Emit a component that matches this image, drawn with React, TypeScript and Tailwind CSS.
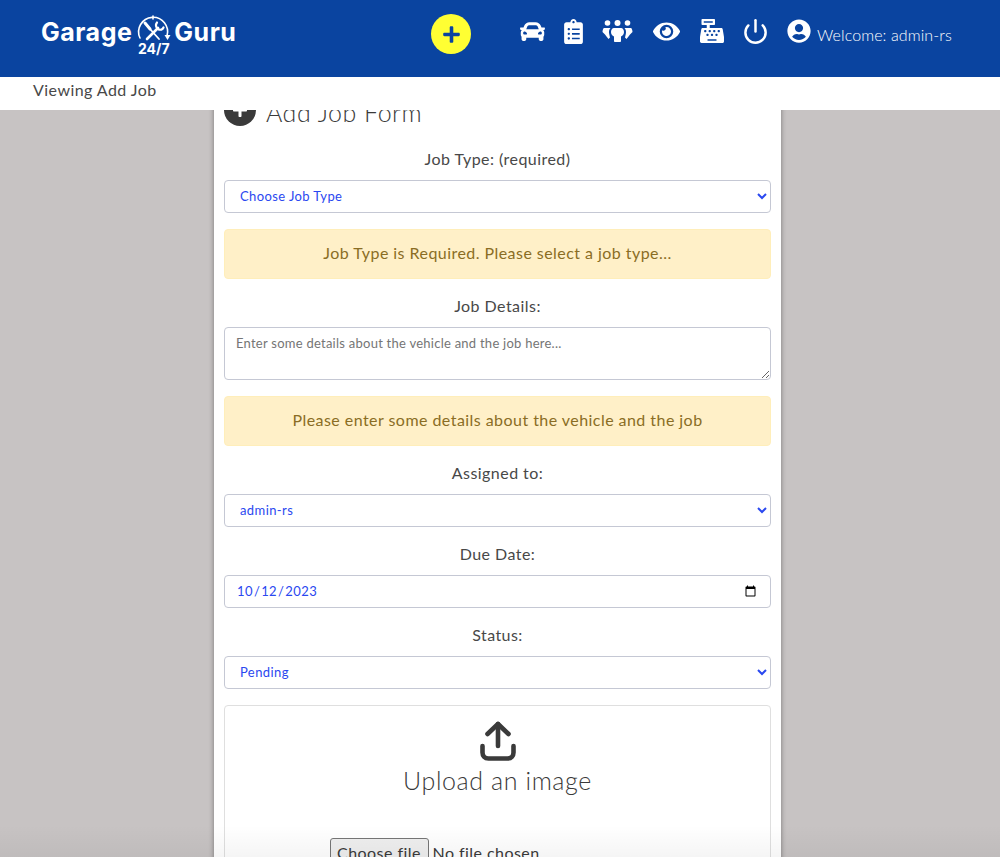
import { FaCar, FaClipboardList, FaEye, FaCashRegister, FaPlus, FaUserCircle } from "react-icons/fa"
import { LuPower } from "react-icons/lu"

const labelClass = "block h-6 text-center text-base text-[#484848] leading-[22px] mb-2"
const controlClass = "w-full h-[33px] rounded border border-[#c5c8d4] bg-white px-[11px] text-[13px] tracking-[0.4px] text-[#2a48f0]"

function Alert({ text }: { text: string }) {
  return (
    <div className="mb-4 h-[50px] pb-[2px] rounded border border-[#ffeeba] bg-[#fff0c8] flex items-center justify-center text-base text-[#8a6d24]">
      {text}
    </div>
  )
}

function Logo() {
  return (
    <div className="relative flex items-center text-white font-bold text-[25px] leading-none font-['Inter',sans-serif] tracking-[0.5px]">
      <span>Garage</span>
      <svg viewBox="0 0 36 36" className="w-[36px] h-[36px] mx-[3px]" fill="none" stroke="white" strokeWidth="1.6" strokeLinecap="round">
        <path d="M5 24A14.500 14.500 0 1 1 32 22" />
        <path d="M18 2v3" />
        <path d="M29.500 21l3 5 3-5z" fill="white" stroke="none" />
        {/* screwdriver */}
        <path d="M10 9l5 6" strokeWidth="3" />
        <path d="M15 15l9 10" strokeWidth="1.800" />
        {/* wrench */}
        <path d="M12 25L23 14" strokeWidth="2.600" />
        <path d="M22 8.500c-1.600 2-1.400 5 1 6.500s4.600.6 5.500-1.500" strokeWidth="2.200" />
      </svg>
      <span>Guru</span>
      <span className="absolute left-[97px] top-[28px] text-[14px] tracking-normal">24/7</span>
    </div>
  )
}

function PeopleIcon() {
  return (
    <svg viewBox="0 0 31 22" className="w-[31px] h-[22px]" fill="white">
      <circle cx="5.500" cy="3" r="2.800" />
      <circle cx="15.500" cy="3" r="3" />
      <circle cx="25.500" cy="3" r="2.800" />
      <path d="M2.500 8h6c-1.500 1.500-1.800 3.500-1.300 6l.8 3.500-1.500 1.500-2-2.500-1.500-2-2.500-2.500c0-2 1-4 1.500-4z" />
      <path d="M28.500 8h-6c1.500 1.500 1.800 3.500 1.300 6l-.8 3.500 1.500 1.500 2-2.500 1.500-2 2.500-2.500c0-2-1-4-1.500-4z" />
      <path d="M12 8h7c1.800 0 3 1.800 3 4s-1.200 3.500-3 4.500V21c0 .6-.5 1-1 1h-5c-.5 0-1-.4-1-1v-4.500c-1.800-1-3-2.300-3-4.500s1.200-4 3-4z" />
    </svg>
  )
}

function UploadIcon() {
  return (
    <svg viewBox="0 0 36 40" className="w-[36px] h-[40px]" fill="none" stroke="#3a3a3a" strokeWidth="4.600" strokeLinecap="round" strokeLinejoin="round">
      <path d="M18 25V3" />
      <path d="M7.500 13L18 3l10.500 10" />
      <path d="M2.500 25v6.500c0 3 2 6 6 6h19c4 0 6-3 6-6V25" />
    </svg>
  )
}

export default function App() {
  return (
    <div className="h-[857px] flex flex-col overflow-hidden relative bg-[#c7c3c3] text-[#3a3a3a] font-['Lato',sans-serif] tracking-[0.45px]">
      {/* Header */}
      <header className="h-[77px] shrink-0 bg-[#0a44a0] text-white flex items-start">
        <div className="w-[431px] pl-[41px] pt-[14px]">
          <Logo />
        </div>
        <div className="mt-[14px] w-[40px] h-[40px] rounded-full bg-[#ffff33] flex items-center justify-center text-[#0a44a0]">
          <FaPlus size={19} />
        </div>
        <div className="ml-[49px] mt-[19px] h-[24px] flex items-center">
          <FaCar size={25} />
          <FaClipboardList size={25} className="ml-[16px]" />
          <div className="ml-[16px]">
            <PeopleIcon />
          </div>
          <FaEye size={27} className="ml-[20px]" />
          <FaCashRegister size={24} className="ml-[20px]" />
          <LuPower size={27} strokeWidth={2.2} className="ml-[18px]" />
          <FaUserCircle size={24} className="ml-[18px]" />
          <span className="ml-[6px] mt-[8px] text-base font-light tracking-[0.1px]">Welcome: admin-rs</span>
        </div>
      </header>

      {/* Breadcrumb */}
      <div className="h-[33px] shrink-0 bg-white pl-[33px] pb-[8px] flex items-center text-base text-[#484848] relative z-10">Viewing Add Job</div>

      {/* Form */}
      <main className="flex-1 min-h-0 flex justify-center pr-[5px]">
        <div className="w-[567px] shrink-0 -mt-[16px] h-fit bg-white px-[10px] shadow-[0_0_5px_rgba(0,0,0,0.4)]">
          <div className="flex items-center h-[32px] mb-[22px]">
            <div className="w-[32px] h-[32px] rounded-full bg-[#3a3a3a] flex items-center justify-center text-white">
              <FaPlus size={16} />
            </div>
            <h2 className="ml-[10px] mt-[6px] text-[25px] font-light tracking-[0.5px]">Add Job Form</h2>
          </div>

          <label className={labelClass}>Job Type: (required)</label>
          <select className={`${controlClass} pb-[2px] mb-4`}>
            <option>Choose Job Type</option>
          </select>
          <Alert text="Job Type is Required. Please select a job type..." />

          <label className={labelClass}>Job Details:</label>
          <textarea
            className="block w-full h-[53px] mb-4 rounded border border-[#c5c8d4] bg-white px-[11px] py-[6px] text-[13px] tracking-[0.25px] placeholder:text-[#757575]"
            placeholder="Enter some details about the vehicle and the job here..."
          />
          <Alert text="Please enter some details about the vehicle and the job" />

          <label className={labelClass}>Assigned to:</label>
          <select className={`${controlClass} pb-[2px] mb-4`}>
            <option>admin-rs</option>
          </select>

          <label className={labelClass}>Due Date:</label>
          <input type="date" defaultValue="2023-10-12" className={`${controlClass} mb-4 block`} />

          <label className={labelClass}>Status:</label>
          <select className={`${controlClass} pb-[2px] mb-4`}>
            <option>Pending</option>
          </select>

          <div className="h-[220px] rounded border border-[#dfdfdf] flex flex-col items-center pt-[15px]">
            <UploadIcon />
            <div className="text-[25px] leading-8 mt-[3px] font-light tracking-[0.6px]">Upload an image</div>
            <div className="mt-[42px] w-[336px] flex items-center text-base">
              <button type="button" className="w-[99px] h-[30px] pb-[1px] shrink-0 rounded-[3px] border border-[#767676] bg-[#efefef]">
                Choose file
              </button>
              <span className="ml-1 pb-[1px]">No file chosen</span>
            </div>
          </div>
        </div>
      </main>

      {/* Bottom fade */}
      <div className="absolute left-0 right-0 bottom-0 h-[32px] bg-gradient-to-t from-black/[0.04] to-transparent" />
    </div>
  )
}
